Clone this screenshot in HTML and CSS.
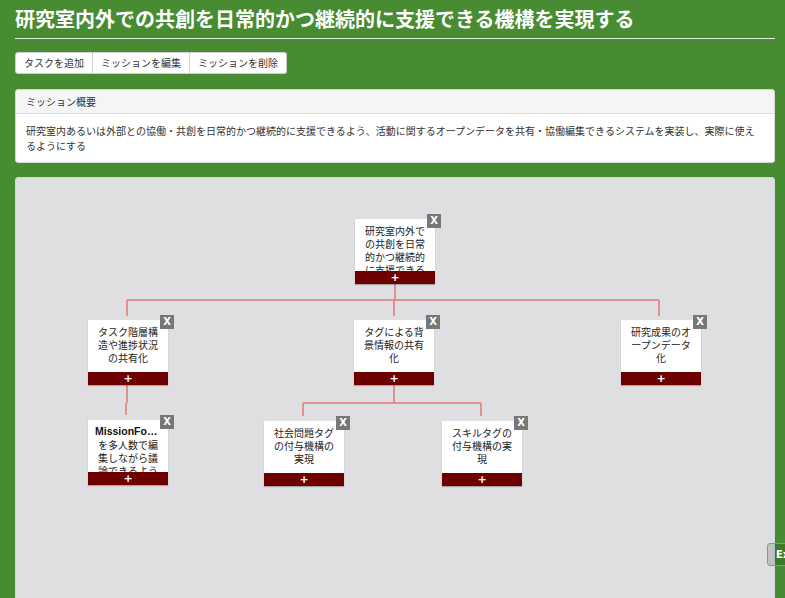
FILE: index.html
```html
<!DOCTYPE html>
<html lang="ja">
<head>
<meta charset="utf-8">
<title>Mission</title>
<link rel="stylesheet" href="styles.css">
</head>
<body>
<h1 class="title">研究室内外での共創を日常的かつ継続的に支援できる機構を実現する</h1>
<div class="btn-group">
  <button class="btn">タスクを追加</button>
  <button class="btn">ミッションを編集</button>
  <button class="btn">ミッションを削除</button>
</div>
<div class="panel">
  <div class="panel-heading">ミッション概要</div>
  <div class="panel-body">研究室内あるいは外部との協働・共創を日常的かつ継続的に支援できるよう、活動に関するオープンデータを共有・協働編集できるシステムを実装し、実際に使えるようにする</div>
</div>
<div class="canvas">
  <svg class="edges" width="760" height="440" viewBox="0 0 760 440">
    <g fill="none" stroke="#e07a7a" stroke-width="1.5">
      <path d="M379 106 V122 M111 122 H643 M111 122 V138 M378 122 V138 M643 122 V138"/>
      <path d="M378 206 V225 M287 225 H465 M287 225 V238 M465 225 V238"/>
      <path d="M111 206 V225 M110 225 V237"/>
    </g>
  </svg>

  <div class="node n1">
    <div class="node-text">研究室内外での共創を日常的かつ継続的に支援できる機構を実現する</div>
    <div class="node-foot">+</div>
    <span class="close">X</span>
  </div>

  <div class="node n2">
    <div class="node-text">タスク階層構造や進捗状況の共有化</div>
    <div class="node-foot">+</div>
    <span class="close">X</span>
  </div>
  <div class="node n3">
    <div class="node-text">タグによる背景情報の共有化</div>
    <div class="node-foot">+</div>
    <span class="close">X</span>
  </div>
  <div class="node n4">
    <div class="node-text">研究成果のオープンデータ化</div>
    <div class="node-foot">+</div>
    <span class="close">X</span>
  </div>

  <div class="node n5">
    <div class="node-text"><span class="word">MissionForest</span>を多人数で編集しながら議論できるようにする</div>
    <div class="node-foot">+</div>
    <span class="close">X</span>
  </div>
  <div class="node n6">
    <div class="node-text">社会問題タグの付与機構の実現</div>
    <div class="node-foot">+</div>
    <span class="close">X</span>
  </div>
  <div class="node n7">
    <div class="node-text">スキルタグの付与機構の実現</div>
    <div class="node-foot">+</div>
    <span class="close">X</span>
  </div>
</div>
<button class="export">Export</button>
</body>
</html>
```
FILE: styles.css
```css
html {
  overflow: hidden;
}
body {
  margin: 0;
  padding: 0 10px 0 15px;
  background: #478b32;
  font-family: "Noto Sans CJK JP", "Noto Sans", sans-serif;
  color: #333;
}
.title {
  margin: 0;
  padding: 5px 0;
  line-height: 28px;
  font-size: 20px;
  font-weight: bold;
  color: #fff;
  border-bottom: 1px solid rgba(255,255,255,0.85);
  white-space: nowrap;
}
.btn-group {
  display: inline-flex;
  margin-top: 13px;
}
.btn {
  height: 22px;
  padding: 0 8px;
  margin: 0;
  background: #fff;
  border: 1px solid #cfcfcf;
  border-left-width: 0;
  font-family: inherit;
  font-size: 10px;
  color: #333;
  line-height: 20px;
}
.btn:first-child {
  border-left-width: 1px;
  border-radius: 3px 0 0 3px;
}
.btn:last-child {
  border-radius: 0 3px 3px 0;
}
.panel {
  margin-top: 15px;
  background: #fff;
  border: 1px solid #d6d6d6;
  border-radius: 3px;
}
.panel-heading {
  background: #f5f5f5;
  border-bottom: 1px solid #dcdcdc;
  padding: 0 10px;
  line-height: 23px;
  font-size: 10px;
  color: #333;
  border-radius: 3px 3px 0 0;
}
.panel-body {
  padding: 9px 10px;
  font-size: 10px;
  line-height: 15px;
  color: #333;
}
.canvas {
  position: relative;
  margin-top: 14px;
  height: 440px;
  background: #dfdfe1;
  border: 1px solid #c9dadd;
  border-radius: 3px;
}
.edges {
  position: absolute;
  left: 0;
  top: 0;
}
.node {
  position: absolute;
  width: 80px;
  background: #fff;
  box-shadow: 0 1px 1px rgba(0,0,0,0.25);
}
.node-text {
  height: 47px;
  padding: 5px 7px 0;
  overflow: hidden;
  font-size: 10px;
  line-height: 13px;
  text-align: center;
  color: #222;
}
.word {
  display: block;
  overflow: hidden;
  white-space: nowrap;
  text-overflow: ellipsis;
  font-family: "Liberation Sans", sans-serif;
  font-weight: bold;
  font-size: 10.5px;
  color: #111;
}
.node-foot {
  height: 13px;
  background: #6e0000;
  color: #fff;
  font-family: "DejaVu Sans", sans-serif;
  font-weight: bold;
  font-size: 11px;
  line-height: 13px;
  text-align: center;
}
.close {
  position: absolute;
  right: -6px;
  top: -5px;
  width: 14px;
  height: 14px;
  background: #777;
  color: #fff;
  font-family: "DejaVu Sans", sans-serif;
  font-weight: bold;
  font-size: 10px;
  line-height: 14px;
  text-align: center;
}
.n1 { left: 339px; top: 41px; }
.n2 { left: 72px; top: 142px; }
.n3 { left: 338px; top: 142px; }
.n4 { left: 605px; top: 142px; }
.n5 { left: 72px; top: 242px; }
.n6 { left: 248px; top: 243px; }
.n7 { left: 426px; top: 243px; }
.export {
  position: absolute;
  left: 767px;
  top: 543px;
  width: 60px;
  height: 23px;
  padding: 0 0 0 8px;
  margin: 0;
  background: rgba(0,0,0,0.13);
  border: 1px solid #5cb85c;
  border-radius: 3px;
  color: #fff;
  font-family: "DejaVu Sans", sans-serif;
  font-weight: bold;
  font-size: 10px;
  text-align: left;
}
```
